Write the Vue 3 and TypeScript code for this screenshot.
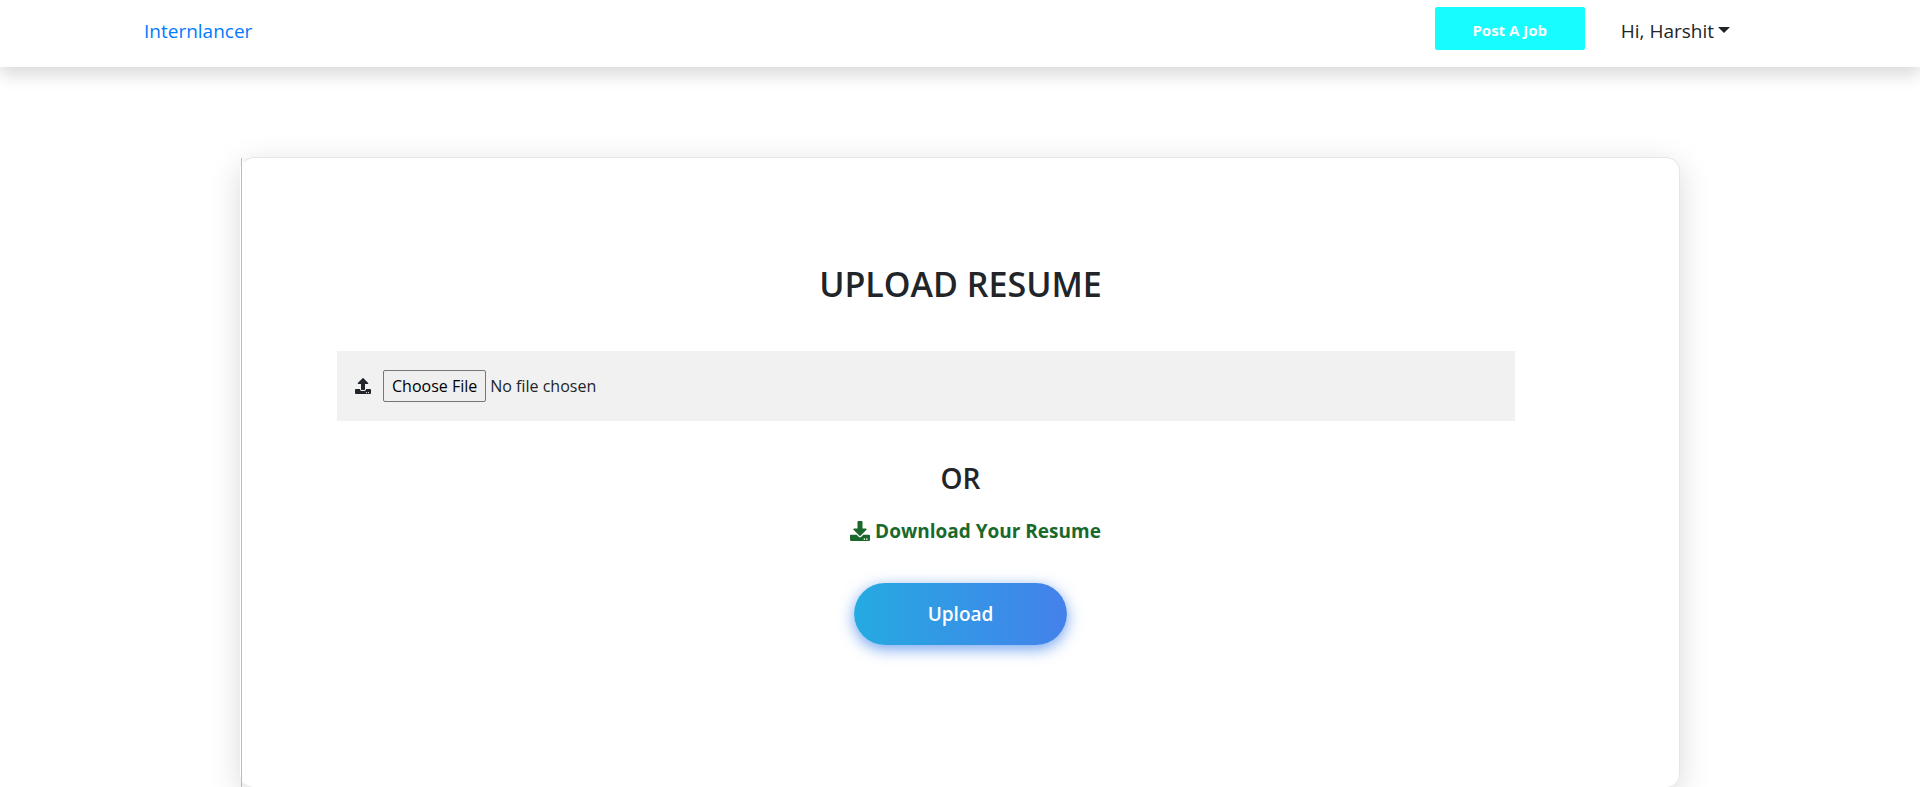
<script setup lang="ts">
import { ref } from 'vue'

const userName = ref('Harshit')
const resume = ref<File | null>(null)

function onFileChange(event: Event) {
  const input = event.target as HTMLInputElement
  resume.value = input.files?.[0] ?? null
}

function upload() {
  if (!resume.value) return
  const body = new FormData()
  body.append('resume', resume.value)
}
</script>

<template>
  <div class="page">
    <header class="navbar">
      <a class="brand" href="#">Internlancer</a>
      <nav class="nav-actions">
        <button class="post-job" type="button">Post A Job</button>
        <button class="user-menu" type="button" aria-haspopup="true">
          Hi, {{ userName }}<span class="caret"></span>
        </button>
      </nav>
    </header>

    <main class="card">
      <form class="card-body" @submit.prevent="upload">
        <h1 class="title">UPLOAD RESUME</h1>

        <div class="file-row">
          <label class="file-label" for="resume" aria-label="Resume file">
            <svg class="icon-small" viewBox="0 0 512 512" aria-hidden="true">
              <path
                fill="currentColor"
                d="M296 384h-80c-13.3 0-24-10.7-24-24V192h-87.7c-17.8 0-26.7-21.5-14.1-34.1L242.3 5.7c7.5-7.5 19.8-7.5 27.3 0l152.2 152.2c12.6 12.6 3.7 34.1-14.1 34.1H320v168c0 13.3-10.7 24-24 24zm216-8v112c0 13.3-10.7 24-24 24H24c-13.3 0-24-10.7-24-24V376c0-13.3 10.7-24 24-24h136v8c0 30.9 25.1 56 56 56h80c30.9 0 56-25.1 56-56v-8h136c13.3 0 24 10.7 24 24zm-124 88c0-11-9-20-20-20s-20 9-20 20 9 20 20 20 20-9 20-20zm64 0c0-11-9-20-20-20s-20 9-20 20 9 20 20 20 20-9 20-20z"
              />
            </svg>
          </label>
          <input id="resume" class="file-input" type="file" @change="onFileChange" />
        </div>

        <h2 class="or">OR</h2>

        <a class="download" href="#">
          <svg class="icon-large" viewBox="0 0 512 512" aria-hidden="true">
            <path
              fill="currentColor"
              d="M216 0h80c13.3 0 24 10.7 24 24v168h87.7c17.8 0 26.7 21.5 14.1 34.1L269.7 378.3c-7.5 7.5-19.8 7.5-27.3 0L90.1 226.1c-12.6-12.6-3.7-34.1 14.1-34.1H192V24c0-13.3 10.7-24 24-24zm296 376v112c0 13.3-10.7 24-24 24H24c-13.3 0-24-10.7-24-24V376c0-13.3 10.7-24 24-24h146.7l49 49c20.1 20.1 52.5 20.1 72.6 0l49-49H488c13.3 0 24 10.7 24 24zm-124 88c0-11-9-20-20-20s-20 9-20 20 9 20 20 20 20-9 20-20zm64 0c0-11-9-20-20-20s-20 9-20 20 9 20 20 20 20-9 20-20z"
            />
          </svg>
          Download Your Resume
        </a>

        <button class="upload" type="submit">Upload</button>
      </form>
    </main>
  </div>
</template>

<style>
body {
  margin: 0;
  background: #fff;
}
</style>

<style scoped>
.page {
  color: #212529;
  font-family: 'Segoe UI', 'Open Sans', 'Noto Sans', sans-serif;
  font-size: 16px;
  overflow: hidden;
}

.page *,
.page *::before {
  box-sizing: border-box;
}

button,
input {
  font-family: inherit;
}

.navbar {
  display: flex;
  justify-content: space-between;
  align-items: flex-start;
  padding: 7px 190px 17px 144px;
  background: #fff;
  box-shadow: 0 8px 16px rgba(0, 0, 0, 0.15);
}

.brand {
  color: #007bff;
  font-size: 19px;
  line-height: 48px;
  height: 43px;
  text-decoration: none;
}

.nav-actions {
  display: flex;
  gap: 36px;
}

.post-job {
  width: 150px;
  height: 43px;
  padding: 2px 0 0;
  border: 0;
  border-radius: 2px;
  background: #17fcff;
  color: #fff;
  font-size: 15px;
  font-weight: 700;
}

.user-menu {
  display: flex;
  align-items: center;
  height: 43px;
  padding: 4px 0 0;
  border: 0;
  background: none;
  color: #212529;
  font-size: 19px;
}

.caret {
  margin-left: 4px;
  margin-bottom: 2px;
  border-top: 6px solid;
  border-right: 6px solid transparent;
  border-left: 6px solid transparent;
}

.card {
  width: 75%;
  margin: 90px auto 0;
  border: 1px solid #e6e6e6;
  border-left-color: transparent;
  border-radius: 14px;
  box-shadow: 0 8px 32px rgba(0, 0, 0, 0.15);
}

.card-body {
  display: flex;
  flex-direction: column;
  align-items: center;
  padding: 101px 0 142px;
  border-left: 1px solid #bbb;
}

.title {
  margin: 0 0 42px;
  font-size: 34px;
  font-weight: 600;
  line-height: 50px;
}

.file-row {
  display: flex;
  align-items: center;
  align-self: stretch;
  height: 70px;
  margin: 0 164px 0 95px;
  padding: 0 18px;
  background: #f1f1f1;
}

.file-label {
  display: flex;
  margin-right: 12px;
}

.icon-small {
  width: 16px;
  height: 16px;
}

.file-input {
  flex: 1;
  color: #212529;
  font-size: 16px;
}

.file-input::file-selector-button {
  height: 32px;
  margin-right: 4px;
  padding: 0 8px;
  border: 1px solid #767676;
  border-radius: 2px;
  background: #efefef;
  color: #000;
  font-family: inherit;
  font-size: 16px;
}

.or {
  margin: 36px 0 16px;
  font-size: 28px;
  font-weight: 600;
  line-height: 42px;
}

.download {
  display: flex;
  align-items: center;
  gap: 5px;
  margin-left: 30px;
  color: #19692c;
  font-size: 19px;
  font-weight: 700;
  line-height: 32px;
  text-decoration: none;
}

.icon-large {
  width: 20px;
  height: 20px;
}

.upload {
  width: 213px;
  height: 62px;
  margin-top: 36px;
  border: 0;
  border-radius: 31px;
  background: linear-gradient(to right, #25aae1, #4481eb);
  box-shadow: 0 4px 15px rgba(65, 132, 234, 0.75);
  color: #fff;
  font-size: 19px;
  font-weight: 600;
}
</style>
